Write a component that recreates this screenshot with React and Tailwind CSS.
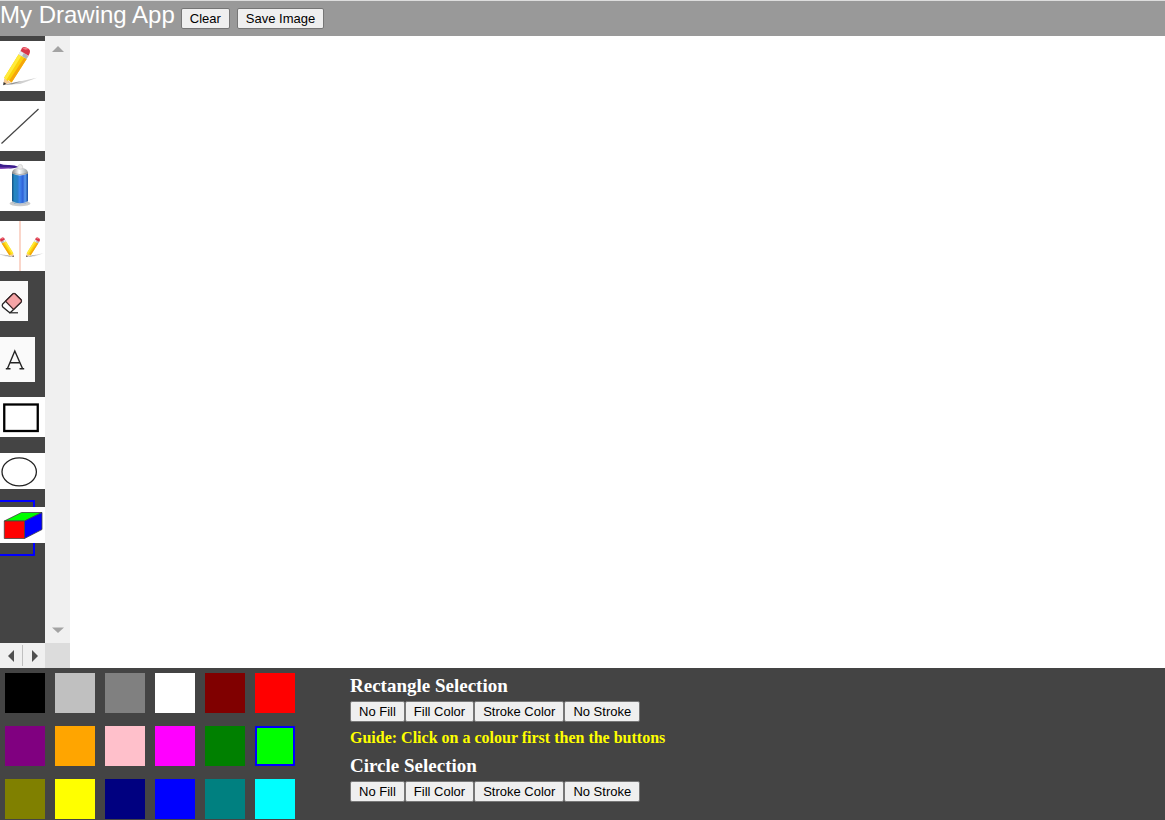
import { useState } from "react";
import clsx from "clsx";

function PencilShape() {
  return (
    <g>
      <path d="M5 46 L24 42 L40 38.500 L22 45 Z" fill="#777" opacity="0.35" />
      <path d="M5 46 L18 43 L24 42 L14 45.500 Z" fill="#555" opacity="0.5" />
      <path d="M5 39 L12.500 43.500 L4.500 46 Z" fill="#f5c995" />
      <path d="M4.500 43 L7.500 45.200 L4 46.500 Z" fill="#333" />
      <path d="M5 38.500 L20.500 13.500 L29 18.500 L13 43.500 L10 41 L8.500 42 Z" fill="#fbd20b" />
      <path d="M5 38.500 L20.500 13.500 L23.500 15 L7.500 40.500 Z" fill="#ffeb3b" />
      <path d="M10.500 41.500 L26.500 17 L29 18.500 L13 43.500 Z" fill="#f5a60b" />
      <path d="M20.500 13.500 L22.500 10 L31 15.200 L29 18.500 Z" fill="#b0b4b9" />
      <path d="M20.500 13.500 L22.500 10 L26 12 L24 15.500 Z" fill="#e9ecee" />
      <path d="M22.500 10 L24 6.800 Q25.500 5.200 28 6 L31.500 8 Q33.200 9.800 32.300 12 L31 15 Z" fill="#d93548" />
      <path d="M24.500 7 L28 6 L31 8 L27.500 8.800 Z" fill="#f27983" />
    </g>
  );
}

function PencilIcon() {
  return (
    <svg viewBox="0 0 45 50" className="block h-full w-full" aria-hidden="true">
      <g transform="translate(-.6 .6) scale(.94)"><PencilShape /></g>
    </svg>
  );
}

function LineIcon() {
  return (
    <svg viewBox="0 0 45 50" className="block h-full w-full" aria-hidden="true">
      <path d="M1.500 42.500 L38.500 8" stroke="#444" strokeWidth="1.200" />
    </svg>
  );
}

function SprayIcon() {
  return (
    <svg viewBox="0 0 45 50" className="block h-full w-full" aria-hidden="true">
      <defs>
        <linearGradient id="can">
          <stop offset="0" stopColor="#174f80" />
          <stop offset="0.150" stopColor="#2387c0" />
          <stop offset="0.350" stopColor="#2a7fc8" />
          <stop offset="0.480" stopColor="#3f86f0" />
          <stop offset="0.680" stopColor="#2d61d7" />
          <stop offset="0.820" stopColor="#5b9cf0" />
          <stop offset="1" stopColor="#174ba0" />
        </linearGradient>
        <linearGradient id="metal">
          <stop offset="0" stopColor="#888" />
          <stop offset="0.450" stopColor="#fff" />
          <stop offset="1" stopColor="#929a9c" />
        </linearGradient>
      </defs>
      <ellipse cx="20" cy="42.500" rx="10.500" ry="2.800" fill="#999" opacity="0.5" />
      <path d="M0 2.800 Q3 4 8 4 Q15 3.800 18.500 6 Q13 8 8 7.200 Q3 7 0 8 Z" fill="#3b1c8c" />
      <path d="M0 6.500 Q8 6.600 14 6 Q8 8 0 8 Z" fill="#8c4bbc" />
      <path d="M12 12 L12 40.500 Q13 43 20 43 Q27 43 28 40.500 L28 12 Z" fill="url(#can)" />
      <path d="M12 11.500 Q12.500 8 17 7 L23 7 Q27.500 8 28 11.500 L28 12.500 Q20 16.500 12 12.500 Z" fill="url(#metal)" />
      <path d="M12 11.500 Q20 15.500 28 11.500" fill="none" stroke="#888" strokeWidth="0.600" />
      <path d="M17.500 7.500 L18.500 4 Q20 3 22 4 L23 7.500 Q20 9 17.500 7.500 Z" fill="#ececec" stroke="#bbb" strokeWidth="0.500" />
      <path d="M12 40 Q20 44.500 28 40 L28 41.500 Q20 45.500 12 41.500 Z" fill="#b8c2cc" />
    </svg>
  );
}

function MirrorIcon() {
  return (
    <svg viewBox="0 0 45 50" className="block h-full w-full" aria-hidden="true">
      <path d="M20 0 V50" stroke="#f8c8b8" strokeWidth="1.500" />
      <g transform="translate(24.300 13.700) scale(.48)"><PencilShape /></g>
      <g transform="translate(15.700 13.700) scale(-.48 .48)"><PencilShape /></g>
    </svg>
  );
}

function EraserIcon() {
  return (
    <svg viewBox="0 0 28 40" className="block h-full w-full" aria-hidden="true">
      <path d="M2.500 23.200 L12.800 13 Q14 12 15.200 13 L21 18.700 Q22 20 21 21.200 L11 31 Q10 32 8.800 31 L2.800 26 Q1.800 24.600 2.500 23.200 Z" fill="#fff" stroke="#242424" strokeWidth="1.300" />
      <path d="M5.500 20.200 L12.800 13 Q14 12 15.200 13 L21 18.700 Q22 20 21 21.200 L13.500 28.500 Z" fill="#f5a4a6" stroke="#3c2426" strokeWidth="1.200" />
      <path d="M9 31.800 H18" stroke="#222" strokeWidth="1.200" />
    </svg>
  );
}

function LetterToolIcon() {
  return (
    <svg viewBox="0 0 35 45" className="block h-full w-full" fill="none" stroke="#252525" strokeWidth="1.400" aria-hidden="true">
      <path d="M7.500 31.500 L14.800 14 L22.500 31.500 M10 25.800 H20 M5.800 31.800 H10.500 M19.500 31.800 H24.200" />
    </svg>
  );
}

function RectangleIcon() {
  return (
    <svg viewBox="0 0 45 40" className="block h-full w-full" aria-hidden="true">
      <rect x="4.250" y="7.500" width="33.500" height="26.500" fill="none" stroke="#000" strokeWidth="2.300" />
    </svg>
  );
}

function EllipseIcon() {
  return (
    <svg viewBox="0 0 45 36" className="block h-full w-full" aria-hidden="true">
      <ellipse cx="19.200" cy="18.800" rx="17.200" ry="14" fill="none" stroke="#222" strokeWidth="1.300" />
    </svg>
  );
}

function CubeIcon() {
  return (
    <svg viewBox="0 0 45 36" className="block h-full w-full" stroke="#444" strokeWidth="0.800" strokeLinejoin="round" aria-hidden="true">
      <path d="M4.300 14 L21.500 5.500 H42 L24.500 14 Z" fill="#0f0" />
      <path d="M24.500 14 L42 5.500 V22.500 L24.500 31.500 Z" fill="#00f" />
      <path d="M4.300 14 H24.500 V31.500 H4.300 Z" fill="#f00" />
    </svg>
  );
}

const tools = [
  { name: "Freehand", Icon: PencilIcon, box: "h-[50px] w-[45px] mb-[10px] bg-white" },
  { name: "Line", Icon: LineIcon, box: "h-[50px] w-[45px] mb-[10px] bg-white" },
  { name: "Spray can", Icon: SprayIcon, box: "h-[50px] w-[45px] mb-[10px] bg-white" },
  { name: "Mirror", Icon: MirrorIcon, box: "h-[50px] w-[45px] mb-[10px] bg-white" },
  { name: "Eraser", Icon: EraserIcon, box: "h-10 w-7 mb-4 bg-[#fafafa]" },
  { name: "Text", Icon: LetterToolIcon, box: "h-[45px] w-[35px] mb-[15px] bg-[#fafafa]" },
  { name: "Rectangle", Icon: RectangleIcon, box: "h-10 w-[45px] mb-4 bg-white" },
  { name: "Circle", Icon: EllipseIcon, box: "h-9 w-[45px] mb-[11px] bg-white" },
  { name: "Cube", Icon: CubeIcon, box: "h-9 w-[45px] bg-white" },
];

const swatches = [
  ["Black", "bg-[#000000]"], ["Silver", "bg-[#c0c0c0]"], ["Gray", "bg-[#808080]"],
  ["White", "bg-[#ffffff]"], ["Maroon", "bg-[#800000]"], ["Red", "bg-[#ff0000]"],
  ["Purple", "bg-[#800080]"], ["Orange", "bg-[#ffa500]"], ["Pink", "bg-[#ffc0cb]"],
  ["Magenta", "bg-[#ff00ff]"], ["Green", "bg-[#008000]"], ["Lime", "bg-[#00ff00]"],
  ["Olive", "bg-[#808000]"], ["Yellow", "bg-[#ffff00]"], ["Navy", "bg-[#000080]"],
  ["Blue", "bg-[#0000ff]"], ["Teal", "bg-[#008080]"], ["Cyan", "bg-[#00ffff]"],
];

function PlainButton({ children }) {
  return (
    <button
      type="button"
      className="h-[21px] rounded-[2px] border border-[#767676] bg-[#efefef] px-2 font-['Liberation_Sans',sans-serif] text-[13px] leading-[18px] font-normal whitespace-nowrap text-black hover:bg-[#e5e5e5]"
    >
      {children}
    </button>
  );
}

function ShapeButtons() {
  return (
    <div className="flex">
      <PlainButton>No Fill</PlainButton>
      <PlainButton>Fill Color</PlainButton>
      <PlainButton>Stroke Color</PlainButton>
      <PlainButton>No Stroke</PlainButton>
    </div>
  );
}

function ScrollArrow({ label, d, className }) {
  return (
    <button type="button" aria-label={label} className={clsx("flex items-center justify-center bg-[#f0f0f0]", className)}>
      <svg viewBox="0 0 12 12" className="size-3" fill="currentColor" aria-hidden="true">
        <path d={d} />
      </svg>
    </button>
  );
}

function Toolbox() {
  const [selected, setSelected] = useState("Cube");
  return (
    <aside className="grid shrink-0 grid-cols-[45px_25px] grid-rows-[1fr_25px]">
      <div className="flex flex-col items-start bg-[#444] pt-[5px]">
        {tools.map(({ name, Icon, box }) => {
          const active = selected === name;
          return (
            <div
              key={name}
              className={clsx("w-[35px]", active && "border-y-2 border-r-2 border-[#00f] pt-[5px] pb-[11px]")}
            >
              <button type="button" aria-label={name} aria-pressed={active} onClick={() => setSelected(name)} className={clsx("block", box)}>
                <Icon />
              </button>
            </div>
          );
        })}
      </div>
      <div className="flex flex-col justify-between bg-[#f0f0f0] text-[#a3a3a3]">
        <ScrollArrow label="Scroll up" d="M0 9 L6 3 L12 9 Z" className="h-[25px]" />
        <ScrollArrow label="Scroll down" d="M0 2.500 L6 8 L12 2.500 Z" className="h-[25px]" />
      </div>
      <div className="flex items-center bg-[#f0f0f0] text-[#505050]">
        <ScrollArrow label="Scroll left" d="M9 0 L3 6 L9 12 Z" className="h-full flex-1" />
        <div className="h-[21px] w-px bg-[#c0c0c0]" />
        <ScrollArrow label="Scroll right" d="M4 0 L10 6 L4 12 Z" className="h-full flex-1" />
      </div>
      <div className="bg-[#dcdcdc]" />
    </aside>
  );
}

function Palette() {
  const [selected, setSelected] = useState("Lime");
  return (
    <div className="grid w-[350px] shrink-0 grid-cols-[repeat(6,40px)] content-start gap-x-[10px] gap-y-[13px] pl-[5px]">
      {swatches.map(([name, color]) => (
        <button
          key={name}
          type="button"
          aria-label={name}
          aria-pressed={selected === name}
          onClick={() => setSelected(name)}
          className={clsx("size-10", color, selected === name && "border-2 border-[#00f]")}
        />
      ))}
    </div>
  );
}

export default function App() {
  return (
    <div className="flex min-h-screen flex-col bg-white font-['Liberation_Serif',serif]">
      <header className="flex h-9 items-start border-t border-[#ddd] bg-[#999]">
        <h1 className="font-['Liberation_Sans',sans-serif] text-2xl leading-7 text-white">My Drawing App</h1>
        <div className="flex gap-[7px] pt-[7px] pl-[6px]">
          <PlainButton>Clear</PlainButton>
          <PlainButton>Save Image</PlainButton>
        </div>
      </header>
      <main className="flex flex-1">
        <Toolbox />
        <canvas aria-label="Drawing area" className="min-w-0 flex-1 bg-white" />
      </main>
      <footer className="flex h-[152px] shrink-0 bg-[#444] pt-[5px]">
        <Palette />
        <section className="pt-[2px] font-bold">
          <h2 className="mb-[4px] text-[19px] leading-[22px] text-white">Rectangle Selection</h2>
          <ShapeButtons />
          <p className="mt-[6px] mb-[7px] text-[16px] leading-5 text-[#ff0]">Guide: Click on a colour first then the buttons</p>
          <h2 className="mb-[4px] text-[19px] leading-[22px] text-white">Circle Selection</h2>
          <ShapeButtons />
        </section>
      </footer>
    </div>
  );
}
